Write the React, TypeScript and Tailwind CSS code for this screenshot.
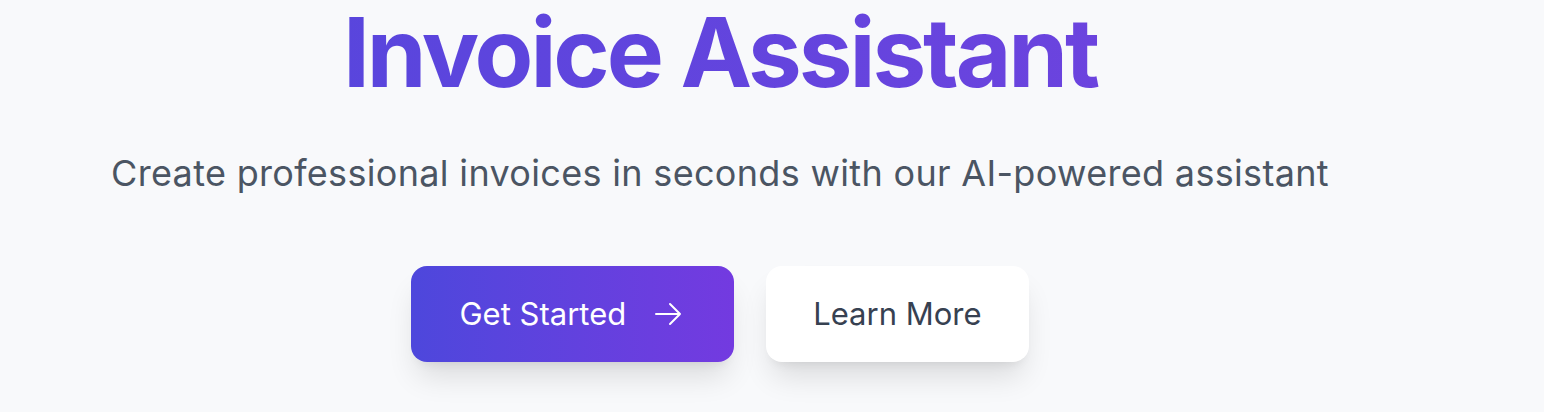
function ArrowIcon() {
  return (
    <svg
      viewBox="0 0 24 24"
      fill="none"
      stroke="currentColor"
      strokeWidth={1.5}
      className="ml-[26px] h-8 w-8"
      aria-hidden="true"
    >
      <path
        strokeLinecap="round"
        strokeLinejoin="round"
        d="M13.5 4.5 21 12m0 0-7.5 7.5M21 12H3"
      />
    </svg>
  );
}

export default function App() {
  const btnShadow =
    "shadow-[0_20px_30px_-6px_rgba(0,0,0,0.12),0_8px_12px_-8px_rgba(0,0,0,0.1)]";

  return (
    <div className="min-h-[412px] w-full overflow-hidden bg-[#f8f9fb] font-['Inter',sans-serif]">
      <section className="flex flex-col items-center pr-[104px] pt-[4px] text-center">
        <h1 className="w-full bg-gradient-to-r from-[#5046dc] to-[#7342df] bg-clip-text text-[96px] font-bold leading-none tracking-[-0.032em] text-transparent">
          Invoice Assistant
        </h1>

        <p className="mt-[45px] text-[36px] leading-[56px] tracking-[0.009em] text-[#4b5563]">
          Create professional invoices in seconds with our AI-powered assistant
        </p>

        <div className="mt-[65px] flex items-center gap-8">
          <a
            href="#start"
            className={`inline-flex h-24 items-center rounded-2xl bg-gradient-to-r from-[#4d47dc] to-[#733ae0] pl-12 pr-[50px] text-[31px] leading-[48px] text-white ${btnShadow}`}
          >
            Get Started
            <ArrowIcon />
          </a>
          <a
            href="#learn"
            className={`inline-flex h-24 items-center rounded-2xl bg-white px-[47px] text-[31px] leading-[48px] text-[#374151] ${btnShadow}`}
          >
            Learn More
          </a>
        </div>
      </section>
    </div>
  );
}
